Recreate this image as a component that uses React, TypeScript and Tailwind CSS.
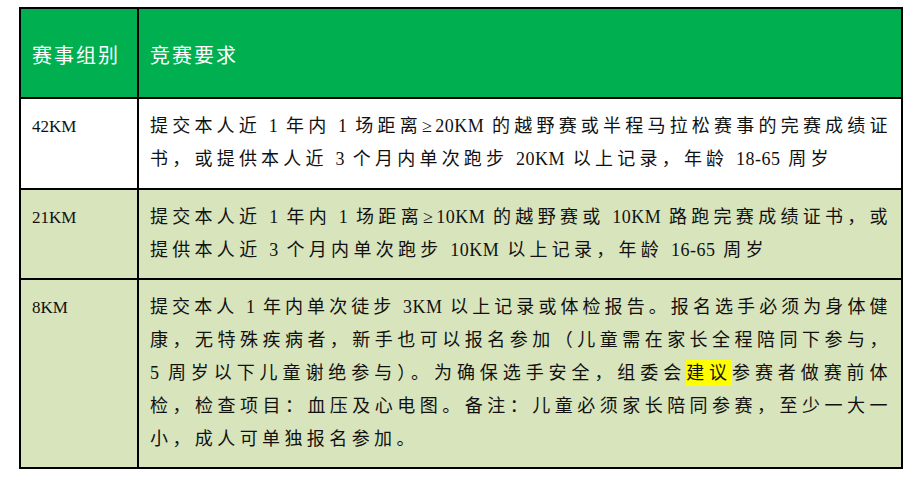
import React from 'react';

// split a line into Latin runs (tight, serif) and CJK runs
function seg(text: string, keyBase = '') {
    const parts = text.match(/[\x20-\x7E]+|[^\x20-\x7E]+/g) || [];
    return parts.map((p, i) =>
        /^[\x20-\x7E]+$/.test(p) ? (
            <span key={keyBase + i} className="tracking-[0.5px] [word-spacing:2px] whitespace-pre">{p}</span>
        ) : (
            <span key={keyBase + i}>{p}</span>
        )
    );
}

function Line({ children, w }: { children: React.ReactNode; w?: string }) {
    return (
        <div className={`whitespace-nowrap text-justify [text-align-last:justify] ${w || ''}`}>
            {children}
        </div>
    );
}

const rows = [
    {
        name: '42KM',
        bg: 'bg-white',
        h: 'h-[91px] border-b-2',
        lines: [
            { t: seg('提交本人近 1 年内 1 场距离≥20KM 的越野赛或半程马拉松赛事的完赛成绩证') },
            { t: seg('书，或提供本人近 3 个月内单次跑步 20KM 以上记录，年龄 18-65 周岁'), w: 'w-[682px]' },
        ],
    },
    {
        name: '21KM',
        bg: 'bg-[#d8e4bc]',
        h: 'h-[90px] border-b-2',
        lines: [
            { t: seg('提交本人近 1 年内 1 场距离≥10KM 的越野赛或 10KM 路跑完赛成绩证书，或') },
            { t: seg('提供本人近 3 个月内单次跑步 10KM 以上记录，年龄 16-65 周岁'), w: 'w-[617px]' },
        ],
    },
    {
        name: '8KM',
        bg: 'bg-[#d8e4bc]',
        h: 'h-[187px]',
        lines: [
            { t: seg('提交本人 1 年内单次徒步 3KM 以上记录或体检报告。报名选手必须为身体健') },
            { t: seg('康，无特殊疾病者，新手也可以报名参加（儿童需在家长全程陪同下参与，') },
            {
                t: [
                    ...seg('5 周岁以下儿童谢绝参与）。为确保选手安全，组委会', 'a'),
                    <span key="hl" className="bg-[#ffff00] py-[3px]">建议</span>,
                    ...seg('参赛者做赛前体', 'b'),
                ],
            },
            { t: seg('检，检查项目：血压及心电图。备注：儿童必须家长陪同参赛，至少一大一') },
            { t: seg('小，成人可单独报名参加。'), w: 'w-[268px]' },
        ],
    },
];

export default function App() {
    return (
        <div className="w-[913px] h-[482px] bg-white pt-[7px] pl-[19px]">
            <div className="w-[884px] border-2 border-black flex flex-col font-['Liberation_Serif','Noto_Sans_CJK_SC',serif] text-[18px] text-[#111]">
                {/* header */}
                <div className="flex h-[90px] bg-[#00b050] text-white font-['Noto_Sans_CJK_SC',sans-serif] text-[20px] tracking-[2px] border-b-2 border-black">
                    <div className="w-[118px] border-r-2 border-black flex items-center pl-[11px] pt-[4px]">赛事组别</div>
                    <div className="flex-1 flex items-center pl-[11px] pt-[4px]">竞赛要求</div>
                </div>

                {rows.map((r) => (
                    <div key={r.name} className={`flex ${r.h} ${r.bg} border-black`}>
                        <div className="w-[118px] border-r-2 border-black pl-[11px] pt-[11px] leading-[33px] text-[17px]">{r.name}</div>
                        <div className="flex-1 pl-[11px] pr-[10px] pt-[11px] leading-[33px] tracking-[3.5px]">
                            {r.lines.map((l, i) => (
                                <Line key={i} w={l.w}>
                                    {l.t}
                                </Line>
                            ))}
                        </div>
                    </div>
                ))}
            </div>
        </div>
    );
}
